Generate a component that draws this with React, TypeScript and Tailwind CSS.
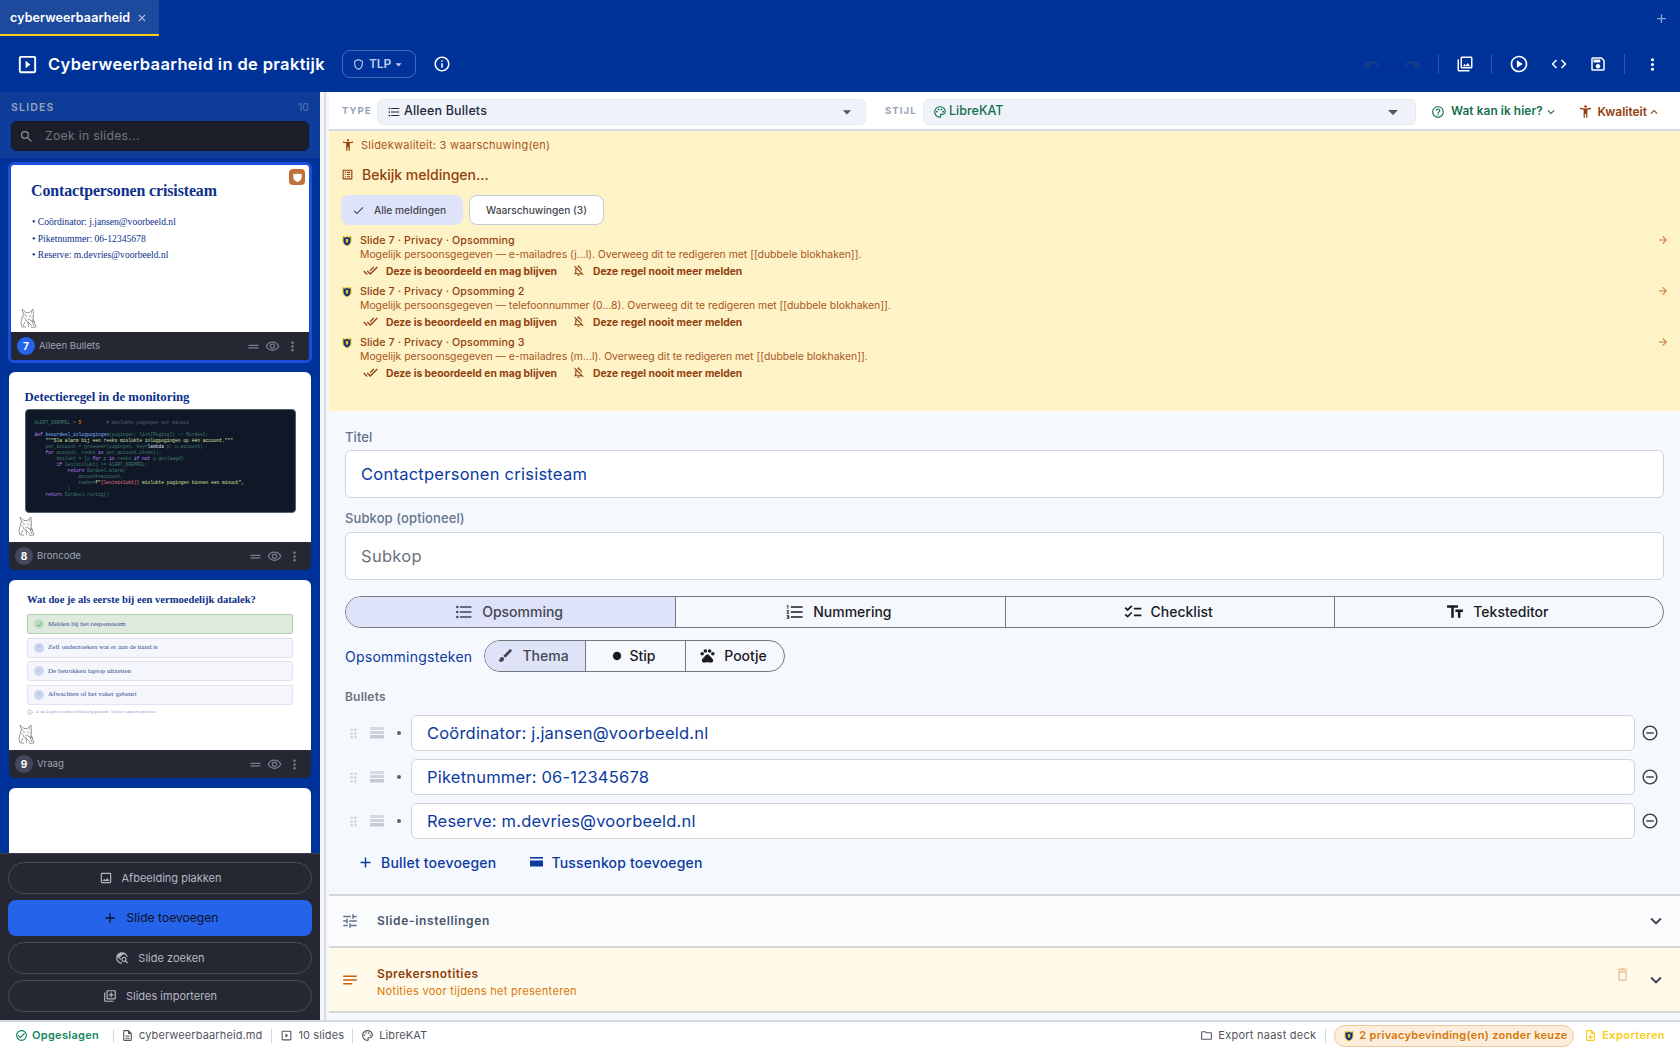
import React from "react";
import {
  MdOutlineSlideshow, MdOutlineShield, MdArrowDropDown, MdInfoOutline, MdUndo, MdRedo, MdOutlinePhotoLibrary,
  MdOutlinePlayCircle, MdCode, MdOutlineSave, MdMoreVert, MdSearch, MdAccessibilityNew, MdOutlineListAlt, MdCheck,
  MdDoneAll, MdOutlineNotificationsOff, MdArrowForward, MdFormatListBulleted, MdFormatListNumbered, MdChecklist,
  MdTextFields, MdBrush, MdCircle, MdPets, MdDragIndicator, MdRemoveCircleOutline, MdAdd, MdTune, MdNotes,
  MdDeleteOutline, MdExpandMore, MdExpandLess, MdCheckCircleOutline, MdOutlineDescription, MdOutlineFolder,
  MdOutlinePalette, MdHelpOutline, MdOutlineNoteAdd, MdOutlineImage, MdTravelExplore, MdOutlineLibraryAdd,
  MdDragHandle, MdOutlineVisibility, MdClose, MdInfoOutline as MdInfoSmall,
} from "react-icons/md";

function PrivacyShield({ size = 12 }: { size?: number }) {
  return (
    <svg width={size} height={size} viewBox="0 0 24 24" className="shrink-0">
      <path d="M4 3l4 1.5L12 3l4 1.5L20 3v9c0 5-4 8-8 10-4-2-8-5-8-10z" fill="#0b2f8a" stroke="#f5c518" strokeWidth="2" />
      <path d="M9.5 8h5v5c0 1.5-1.2 2.5-2.5 3-1.3-.5-2.5-1.5-2.5-3z" fill="#f5c518" />
    </svg>
  );
}

function Cat() {
  return (
    <svg width="17" height="20" viewBox="0 0 17 20" fill="none" stroke="#4a4a4a" strokeWidth="0.55" className="block">
      <path d="M2 1l1.5 5L2 10l-1 5 1 4h4M2 1l4 3.5h3.5L13 1l.5 6-.5 4 2 5 1 3-5 .5" />
      <path d="M5 7.5l2 1M11 7.5l-2 1M7.5 11l1 1 1.5-1M5 12l3 2 4 4M10 12l5 2M5 14l-2 4M8 14l.5 5M12 13l2 5" />
      <path d="M4 5l1 2M11.5 3l0 3M13 8l-2 2M3 9l2 1M6 10l-1 2M14 12l-2 0" stroke="#8a8a8a" />
    </svg>
  );
}

function CardFooter({ n, label, active }: { n: number; label: string; active?: boolean }) {
  return (
    <div className="flex items-center h-[28px] pl-[6px] pr-[9px] bg-[#252833] text-[#9ca3af]">
      <span className={`w-[18px] h-[18px] rounded-full flex items-center justify-center text-[10px] font-bold text-white ${active ? "bg-[#2563eb]" : "bg-[#44485a]"}`}>{n}</span>
      <span className="ml-[4px] text-[9.6px]">{label}</span>
      <span className="ml-auto flex items-center text-[#787e8c]">
        <MdDragHandle size={15} />
        <MdOutlineVisibility size={15} className="ml-[4px]" />
        <MdMoreVert size={15} className="ml-[5px]" />
      </span>
    </div>
  );
}

function Slide1() {
  return (
    <div className="relative h-[167px] bg-white pl-[21px] pt-[14px] font-['Liberation_Serif',serif] text-[#0b2f8a]">
      <div className="text-[15.9px] font-bold leading-[24px] tracking-[-0.1px] -ml-[1px]">Contactpersonen crisisteam</div>
      <div className="mt-[11px] text-[9.6px] leading-[16.7px]">
        <div>• Coördinator: j.jansen@voorbeeld.nl</div>
        <div>• Piketnummer: 06-12345678</div>
        <div>• Reserve: m.devries@voorbeeld.nl</div>
      </div>
      <div className="absolute left-[9px] bottom-[4px]"><Cat /></div>
      <div className="absolute right-[4px] top-[4px] w-[16px] h-[16px] rounded-[4px] bg-[#c2703a] flex items-center justify-center">
        <svg width="11" height="11" viewBox="0 0 24 24" fill="#fff"><path d="M3 3l5 2 4-2 4 2 5-2v9c0 5-4 8-9 10-5-2-9-5-9-10z" /></svg>
      </div>
    </div>
  );
}

const G = "#3f7d68", W = "#d6dde8", P = "#c084fc", Y = "#d9e6a0", D = "#5b6778", B = "#7fb4ff", O = "#f59e0b", R = "#f0788c";
const code: [string, string][][] = [
  [["ALERT_DREMPEL = ", G], ["5", O], ["         # mislukte pogingen per minuut", D]],
  [[" ", D]],
  [["def ", P], ["beoordeel_inlogpogingen", B], ["(pogingen: list[Poging]) -> Oordeel:", G]],
  [['    """Sla alarm bij een reeks mislukte inlogpogingen op één account."""', Y]],
  [["    per_account = groepeer(pogingen, key=", G], ["lambda", W], [" p: p.account)", G]],
  [["    ", G], ["for", P], [" account, reeks ", G], ["in", P], [" per_account.items():", G]],
  [["        mislukt = [p ", G], ["for", P], [" p ", G], ["in", P], [" reeks ", G], ["if not", P], [" p.geslaagd]", G]],
  [["        ", G], ["if", P], [" len(mislukt) >= ALERT_DREMPEL:", G]],
  [["            ", G], ["return", P], [" Oordeel.alarm(", G]],
  [["                account=account,", G]],
  [["                reden=", G], ['f"', Y], ["{len(mislukt)}", R], [' mislukte pogingen binnen een minuut"', Y], [",", W]],
  [["            )", G]],
  [["    ", G], ["return", P], [" Oordeel.rustig()", G]],
];

function Slide2() {
  return (
    <div className="relative h-[170px] bg-white px-[15.5px] pt-[15px] font-['Liberation_Serif',serif]">
      <div className="text-[12.8px] font-bold leading-[20px] text-[#0b2f8a]">Detectieregel in de monitoring</div>
      <div className="mt-[2px] h-[104px] rounded-[4px] bg-[#101828] border border-[#53606f] pl-[9px] pt-[10px] font-['Liberation_Mono',monospace] text-[4.6px] leading-[6px] whitespace-pre">
        {code.map((l, i) => (
          <div key={i} className="h-[6px]">{l.map(([t, c], j) => <span key={j} style={{ color: c }}>{t}</span>)}</div>
        ))}
      </div>
      <div className="absolute left-[9px] bottom-[6px]"><Cat /></div>
    </div>
  );
}

function Opt({ l, t, ok }: { l: string; t: string; ok?: boolean }) {
  return (
    <div className={`h-[20px] rounded-[2px] border flex items-center pl-[6px] text-[7px] text-[#33508f] ${ok ? "bg-[#dfeadf] border-[#aed2ae]" : "bg-[#f4f6fc] border-[#dfe3f2]"}`}>
      <span className={`w-[10px] h-[10px] rounded-full flex items-center justify-center text-[4.5px] ${ok ? "bg-[#bddcbd] text-[#3f8f4f]" : "bg-[#ccd5ee] text-[#9fb0d8]"}`}>{ok ? <MdCheck size={7} /> : l}</span>
      <span className="ml-[4px]">{t}</span>
    </div>
  );
}

function Slide3() {
  return (
    <div className="relative h-[170px] bg-white px-[18px] pt-[12px] font-['Liberation_Serif',serif]">
      <div className="text-[10.6px] font-bold leading-[16px] text-[#0b2f8a]">Wat doe je als eerste bij een vermoedelijk datalek?</div>
      <div className="mt-[6px] flex flex-col gap-[3.5px]">
        <Opt l="A" t="Melden bij het responsteam" ok />
        <Opt l="B" t="Zelf onderzoeken wat er aan de hand is" />
        <Opt l="C" t="De betrokken laptop uitzetten" />
        <Opt l="D" t="Afwachten of het vaker gebeurt" />
      </div>
      <div className="mt-[4px] flex items-center text-[4.2px] text-[#8a9cc8]">
        <MdInfoSmall size={6} />
        <span className="ml-[3px]">4 van 4 opties worden willekeurig getoond · bij fout: opnieuw proberen</span>
      </div>
      <div className="absolute left-[9px] bottom-[6px]"><Cat /></div>
    </div>
  );
}

function SideBtn({ icon, children, primary }: { icon: React.ReactNode; children: React.ReactNode; primary?: boolean }) {
  return (
    <button className={primary
      ? "w-full h-[36px] rounded-[8px] bg-[#2563eb] text-[#0b1220] text-[12.1px] flex items-center justify-center gap-[9px]"
      : "w-full h-[32px] rounded-full border border-[#454955] text-[#b3b7c0] text-[11px] flex items-center justify-center gap-[9px]"}>
      {icon}<span>{children}</span>
    </button>
  );
}

function Sidebar() {
  return (
    <aside className="w-[320px] shrink-0 flex flex-col bg-[#003399] min-h-0">
      <div className="h-[66px] bg-[#0f3c98] px-[11px] pt-[8px] shrink-0">
        <div className="flex items-center justify-between h-[16px] text-[#94a3b8]">
          <span className="text-[10.5px] font-semibold tracking-[1.2px]">SLIDES</span>
          <span className="text-[10.5px] text-[#5b7ab8]">10</span>
        </div>
        <div className="mt-[5px] h-[30px] rounded-[6px] bg-[#1c1f2a] border border-[#15171f] flex items-center pl-[7px] text-[#8a8f9a]">
          <MdSearch size={15} />
          <span className="ml-[11px] text-[12.2px] tracking-[0.3px] text-[#73777f]">Zoek in slides...</span>
        </div>
      </div>
      <div className="flex-1 min-h-0 overflow-hidden px-[9px] pt-[4px] flex flex-col gap-[10px]">
        <div className="rounded-[6px] border-[3px] border-[#1d4ed8] overflow-hidden -mx-[1px] -mb-[1px] shrink-0">
          <Slide1 />
          <CardFooter n={7} label="Alleen Bullets" active />
        </div>
        <div className="rounded-[6px] overflow-hidden shrink-0">
          <Slide2 />
          <CardFooter n={8} label="Broncode" />
        </div>
        <div className="rounded-[6px] overflow-hidden shrink-0">
          <Slide3 />
          <CardFooter n={9} label="Vraag" />
        </div>
        <div className="rounded-t-[6px] bg-white h-[80px] shrink-0" />
      </div>
      <div className="h-[167px] shrink-0 bg-[#252833] border-t border-[#3a3e4a] px-[8px] pt-[8px] flex flex-col gap-[6px]">
        <SideBtn icon={<MdOutlineImage size={14} />}>Afbeelding plakken</SideBtn>
        <SideBtn primary icon={<MdAdd size={16} />}>Slide toevoegen</SideBtn>
        <SideBtn icon={<MdTravelExplore size={14} />}>Slide zoeken</SideBtn>
        <SideBtn icon={<MdOutlineLibraryAdd size={14} />}>Slides importeren</SideBtn>
      </div>
    </aside>
  );
}

function Finding({ title, text }: { title: string; text: string }) {
  return (
    <div className="relative h-[51px] pl-[19px] text-[#92400e] text-[10.7px] leading-[14px]">
      <div className="absolute left-0 top-[1px]"><PrivacyShield size={12} /></div>
      <div className="font-medium tracking-[0.1px] h-[14px]">{title}</div>
      <div className="text-[#a8551c] h-[14px] text-[10.4px]">{text}</div>
      <div className="h-[18px] -mt-[0.5px] flex items-center font-bold text-[10.3px]">
        <MdDoneAll size={15} className="ml-[3px]" />
        <span className="ml-[8px]">Deze is beoordeeld en mag blijven</span>
        <MdOutlineNotificationsOff size={13} className="ml-[15px]" />
        <span className="ml-[8px]">Deze regel nooit meer melden</span>
      </div>
      <MdArrowForward size={12} className="absolute right-[0px] top-[0px] text-[#c9793b]" />
    </div>
  );
}

function Toolbar() {
  return (
    <div className="h-[39px] shrink-0 bg-white border-b-2 border-[#d5d9ea] flex items-center pl-[13px] pr-[19px] pt-[2px] text-[13px]">
      <span className="text-[9.5px] font-bold tracking-[1.1px] text-[#94a3b8] w-[35px]">TYPE</span>
      <div className="h-[26px] w-[489px] rounded-[6px] bg-[#eff3f9] border border-[#e4e9f2] flex items-center pl-[9px] pr-[8px] text-[#1e293b]">
        <MdFormatListBulleted size={14} />
        <span className="ml-[3px] text-[12.5px] font-medium tracking-[0.15px]">Alleen Bullets</span>
        <MdArrowDropDown size={20} className="ml-auto text-[#555]" />
      </div>
      <span className="ml-[19px] text-[9.5px] font-bold tracking-[1.1px] text-[#94a3b8] w-[38px]">STIJL</span>
      <div className="h-[26px] w-[493px] rounded-[6px] bg-[#eff3f9] border border-[#e4e9f2] flex items-center pl-[9px] pr-[10px] text-[#166f4f]">
        <MdOutlinePalette size={14} />
        <span className="ml-[2px] text-[12.5px] font-medium">LibreKAT</span>
        <MdArrowDropDown size={24} className="ml-auto text-[#555]" />
      </div>
      <div className="ml-[15px] flex items-center text-[#166f4f] font-semibold text-[11.8px]">
        <MdHelpOutline size={14} />
        <span className="ml-[6px] tracking-[0.1px]">Wat kan ik hier?</span>
        <MdExpandMore size={14} className="ml-[1px]" />
      </div>
      <div className="ml-auto flex items-center text-[#92400e] font-semibold text-[12px]">
        <MdAccessibilityNew size={15} />
        <span className="ml-[5px]">Kwaliteit</span>
        <MdExpandLess size={14} />
      </div>
    </div>
  );
}

function Quality() {
  return (
    <div className="h-[280px] shrink-0 bg-[#fef2c7] pl-[12px] pr-[11px] pt-[7px] text-[#92400e]">
      <div className="flex items-center h-[14px] text-[#a8551c] text-[11px] tracking-[0.25px]">
        <MdAccessibilityNew size={14} className="text-[#92400e]" />
        <span className="ml-[6px]">Slidekwaliteit: 3 waarschuwing(en)</span>
      </div>
      <div className="flex items-center h-[20px] mt-[12px] text-[14px] font-medium">
        <MdOutlineListAlt size={13} />
        <span className="ml-[8px]">Bekijk meldingen...</span>
      </div>
      <div className="flex gap-[6px] mt-[11px] text-[10.2px] font-medium text-[#44474f]">
        <div className="w-[122px] h-[30px] rounded-[8px] bg-[#dfe3fa] flex items-center pl-[11px] pt-[1px]">
          <MdCheck size={13} />
          <span className="ml-[9px]">Alle meldingen</span>
        </div>
        <div className="w-[135px] h-[30px] rounded-[8px] bg-white border border-[#c6c9d8] flex items-center justify-center pt-[1px]">Waarschuwingen (3)</div>
      </div>
      <div className="mt-[9px]">
        <Finding title="Slide 7 · Privacy · Opsomming" text="Mogelijk persoonsgegeven — e-mailadres (j...l). Overweeg dit te redigeren met [[dubbele blokhaken]]." />
        <Finding title="Slide 7 · Privacy · Opsomming 2" text="Mogelijk persoonsgegeven — telefoonnummer (0...8). Overweeg dit te redigeren met [[dubbele blokhaken]]." />
        <Finding title="Slide 7 · Privacy · Opsomming 3" text="Mogelijk persoonsgegeven — e-mailadres (m...l). Overweeg dit te redigeren met [[dubbele blokhaken]]." />
      </div>
    </div>
  );
}

function Seg({ icon, children, on, first, cls }: { icon: React.ReactNode; children: React.ReactNode; on?: boolean; first?: boolean; cls?: string }) {
  return (
    <div className={`flex items-center justify-center gap-[8px] pb-[1px] pr-[4px] text-[14px] font-medium ${first ? "" : "border-l border-[#74777f]"} ${on ? "bg-[#dfe3fa] text-[#44474f]" : "text-[#1b1b1f]"} ${cls ?? ""}`}>
      {icon}<span>{children}</span>
    </div>
  );
}

function Stripes() {
  return (
    <svg width="15" height="12" viewBox="0 0 15 12" className="shrink-0">
      <rect y="0" width="14" height="3" fill="#d5dbe5" />
      <rect y="4" width="14" height="3" fill="#cbd2dd" />
      <rect y="8" width="14" height="3.5" fill="#c3cad6" />
    </svg>
  );
}

function BulletRow({ text }: { text: string }) {
  return (
    <div className="flex items-center h-[36px]">
      <MdDragIndicator size={15} className="text-[#cbd5e1] ml-[1px]" />
      <span className="ml-[9px]"><Stripes /></span>
      <span className="ml-[12px] w-[3.5px] h-[3.5px] rounded-full bg-[#5b6472]" />
      <div className="ml-[10.5px] flex-1 h-[36px] rounded-[6px] bg-white border border-[#cfd4dd] flex items-center pl-[15px] text-[16.5px] text-[#0b3aa0] tracking-[0.2px]">{text}</div>
      <MdRemoveCircleOutline size={18} className="ml-[6px] mr-[5px] text-[#44474f]" />
    </div>
  );
}

function Editor() {
  return (
    <div className="flex-1 min-h-0 flex flex-col bg-[#f5f8fd]">
      <div className="px-[16px] pt-[17px] h-[483px] shrink-0">
        <div className="text-[13px] font-medium text-[#64748b] h-[19px] leading-[19px] tracking-[0.1px]">Titel</div>
        <div className="mt-[3px] h-[48px] rounded-[6px] bg-white border border-[#cfd4dd] flex items-center pl-[15px] text-[16.5px] text-[#0b3aa0] tracking-[0.25px]">Contactpersonen crisisteam</div>
        <div className="mt-[11px] text-[13px] font-medium text-[#64748b] h-[19px] leading-[19px] tracking-[0.1px]">Subkop (optioneel)</div>
        <div className="mt-[4px] h-[48px] rounded-[6px] bg-white border border-[#cfd4dd] flex items-center pl-[15px] text-[16.5px] text-[#6b7280] tracking-[0.3px]">Subkop</div>
        <div className="mt-[16px] h-[32px] rounded-full border border-[#74777f] grid grid-cols-4 overflow-hidden">
          <Seg first on icon={<MdFormatListBulleted size={20} />}>Opsomming</Seg>
          <Seg icon={<MdFormatListNumbered size={20} />}>Nummering</Seg>
          <Seg icon={<MdChecklist size={20} />}>Checklist</Seg>
          <Seg icon={<MdTextFields size={20} />}>Teksteditor</Seg>
        </div>
        <div className="mt-[12px] flex items-center h-[32px]">
          <span className="text-[14px] text-[#0b3aa0] tracking-[0.25px] w-[139px]">Opsommingsteken</span>
          <div className="h-[32px] w-[301px] rounded-full border border-[#74777f] flex overflow-hidden">
            <Seg first on cls="w-[100px]" icon={<MdBrush size={17} />}>Thema</Seg>
            <Seg cls="w-[100px]" icon={<MdCircle size={10} />}>Stip</Seg>
            <Seg cls="flex-1" icon={<MdPets size={17} />}>Pootje</Seg>
          </div>
        </div>
        <div className="mt-[16px] text-[12px] font-semibold text-[#6b7280] h-[18px] leading-[18px] tracking-[0.2px]">Bullets</div>
        <div className="mt-[9px] flex flex-col gap-[8px]">
          <BulletRow text="Coördinator: j.jansen@voorbeeld.nl" />
          <BulletRow text="Piketnummer: 06-12345678" />
          <BulletRow text="Reserve: m.devries@voorbeeld.nl" />
        </div>
        <div className="mt-[12px] pl-[12px] h-[22px] flex items-center text-[#0b3aa0] text-[14px] font-medium tracking-[0.2px]">
          <MdAdd size={17} />
          <span className="ml-[7px]">Bullet toevoegen</span>
          <svg width="13" height="12" viewBox="0 0 13 12" className="ml-[34px]" fill="#0b3aa0"><rect width="13" height="1.6" y="1" /><rect width="13" height="6" y="4.5" /></svg>
          <span className="ml-[8px]">Tussenkop toevoegen</span>
        </div>
      </div>
      <div className="h-[52px] shrink-0 bg-[#fafbfd] border-t-2 border-[#d2d6dd] flex items-center pl-[12px] pr-[13px] text-[#475569]">
        <MdTune size={18} className="text-[#64748b]" />
        <span className="ml-[18px] text-[12px] font-semibold tracking-[0.65px]">Slide-instellingen</span>
        <MdExpandMore size={22} className="ml-auto text-[#3f424c]" />
      </div>
      <div className="h-[67px] shrink-0 bg-[#fffaea] border-t-2 border-b-2 border-[#d8d8d2] flex items-center pl-[12px] pr-[13px]">
        <MdNotes size={18} className="text-[#c2610c]" />
        <div className="ml-[18px] mt-[5px]">
          <div className="text-[12px] font-semibold text-[#92400e] tracking-[0.4px] leading-[17px]">Sprekersnotities</div>
          <div className="text-[11px] text-[#d97706] tracking-[0.3px] leading-[18px]">Notities voor tijdens het presenteren</div>
        </div>
        <MdDeleteOutline size={17} className="ml-auto text-[#e8c49b] -mt-[10px]" />
        <MdExpandMore size={22} className="ml-[14px] text-[#3f424c]" />
      </div>
    </div>
  );
}

function Divider() {
  return <span className="block w-px h-[14px] bg-[#d5d7dc]" />;
}

function StatusBar() {
  return (
    <div className="h-[30px] shrink-0 bg-white border-t-2 border-[#d5d9e2] flex items-center pl-[15px] pr-[15px] pb-[1px] text-[11px] text-[#52555e] tracking-[0.12px] whitespace-nowrap">
      <MdCheckCircleOutline size={13} className="text-[#15875f]" />
      <span className="ml-[4px] font-semibold text-[#15875f] tracking-[0.3px]">Opgeslagen</span>
      <span className="ml-[14px]"><Divider /></span>
      <MdOutlineDescription size={13} className="ml-[7px]" />
      <span className="ml-[5px]">cyberweerbaarheid.md</span>
      <span className="ml-[9px]"><Divider /></span>
      <MdOutlineSlideshow size={13} className="ml-[8px]" />
      <span className="ml-[5px]">10 slides</span>
      <span className="ml-[8px]"><Divider /></span>
      <MdOutlinePalette size={13} className="ml-[8px]" />
      <span className="ml-[5px]">LibreKAT</span>
      <MdOutlineFolder size={13} className="ml-auto" />
      <span className="ml-[5px] tracking-[0.25px]">Export naast deck</span>
      <span className="ml-[9px]"><Divider /></span>
      <div className="ml-[8px] w-[240px] h-[22px] rounded-full bg-[#fbeedd] border border-[#f0c898] flex items-center pl-[8px] text-[#d97706] font-semibold">
        <PrivacyShield size={12} />
        <span className="ml-[4px] tracking-[0.3px]">2 privacybevinding(en) zonder keuze</span>
      </div>
      <MdOutlineNoteAdd size={13} className="ml-[10px] text-[#facc15]" />
      <span className="ml-[5px] font-semibold text-[#facc15] tracking-[0.4px]">Exporteren</span>
    </div>
  );
}

function HeadBtn({ children, cls }: { children: React.ReactNode; cls: string }) {
  return <span className={`flex items-center justify-center ${cls}`}>{children}</span>;
}

export default function App() {
  return (
    <div className="h-screen w-[1680px] overflow-hidden flex flex-col font-[Inter,sans-serif] bg-[#003399]">
      <div className="h-[36px] shrink-0 flex items-stretch text-white">
        <div className="w-[159px] bg-[#1e4a9e] border-b-2 border-[#facc15] flex items-center pl-[10px] pt-[2px]">
          <span className="text-[12.5px] font-semibold tracking-[0.1px]">cyberweerbaarheid</span>
          <MdClose size={12} className="ml-[6px] text-[#b9c6e3]" />
        </div>
        <span className="ml-auto mr-[11px] flex items-center"><MdAdd size={15} className="text-[#8ea5d8]" /></span>
      </div>
      <div className="h-[56px] shrink-0 flex items-center pl-[16px] pr-px text-white">
        <MdOutlineSlideshow size={23} />
        <span className="ml-[9px] text-[16.5px] font-semibold tracking-[0.35px]">Cyberweerbaarheid in de praktijk</span>
        <div className="ml-[17px] w-[74px] h-[28px] rounded-[8px] border border-[#3f67b5] flex items-center pl-[9px] text-[#c3cfe9]">
          <MdOutlineShield size={13} />
          <span className="ml-[4px] text-[12px] font-semibold">TLP</span>
          <MdArrowDropDown size={15} />
        </div>
        <MdInfoOutline size={18} className="ml-[17px]" />
        <div className="ml-auto flex items-center">
          <HeadBtn cls="w-[40px] text-[#1a3f86]"><MdUndo size={18} /></HeadBtn>
          <HeadBtn cls="w-[40px] text-[#1a3f86]"><MdRedo size={18} /></HeadBtn>
          <span className="w-px h-[20px] bg-[#2d58ab] ml-[6px]" />
          <HeadBtn cls="w-[52px]"><MdOutlinePhotoLibrary size={18} /></HeadBtn>
          <span className="w-px h-[20px] bg-[#2d58ab]" />
          <HeadBtn cls="w-[53px]"><MdOutlinePlayCircle size={20} /></HeadBtn>
          <HeadBtn cls="w-[27px]"><MdCode size={18} /></HeadBtn>
          <HeadBtn cls="w-[52px]"><MdOutlineSave size={18} /></HeadBtn>
          <span className="w-px h-[20px] bg-[#2d58ab]" />
          <HeadBtn cls="w-[54px]"><MdMoreVert size={19} /></HeadBtn>
        </div>
      </div>
      <div className="flex-1 min-h-0 flex">
        <Sidebar />
        <div className="w-[9px] shrink-0 bg-[#f6f7fb] flex justify-center"><span className="w-[2px] bg-[#d9dce6]" /></div>
        <main className="flex-1 min-w-0 flex flex-col bg-[#eff4fc]">
          <Toolbar />
          <Quality />
          <Editor />
        </main>
      </div>
      <StatusBar />
    </div>
  );
}
